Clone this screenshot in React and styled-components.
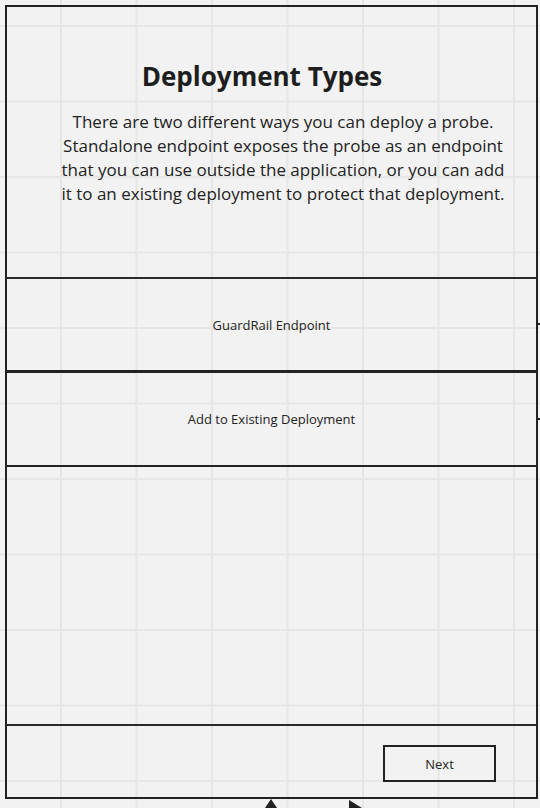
import React from "react";
import styled, { createGlobalStyle } from "styled-components";

const Global = createGlobalStyle`
  html, body {
    margin: 0;
    padding: 0;
    width: 540px;
    height: 808px;
    overflow: hidden;
  }
  body {
    background-color: #f2f2f2;
    background-image:
      linear-gradient(to right, #e6e6e6 2px, transparent 2px),
      linear-gradient(to bottom, #e6e6e6 2px, transparent 2px);
    background-size: 75.5px 75.5px;
    background-position: 60px 25px;
    font-family: "Open Sans", "Noto Sans", sans-serif;
    color: #222;
  }
`;

const Canvas = styled.div`
  position: relative;
  width: 540px;
  height: 808px;
  padding: 5px 2px 0 5px;
  box-sizing: border-box;
`;

const Frame = styled.div`
  width: 533px;
  height: 794px;
  box-sizing: border-box;
  border: 2px solid #222;
  display: flex;
  flex-direction: column;
`;

const Header = styled.section`
  height: 272px;
  box-sizing: border-box;
  border-bottom: 2px solid #2a2a2a;
  padding-top: 51px;
  display: flex;
  flex-direction: column;
  align-items: center;
`;

const Title = styled.h1`
  margin: 0 19px 0 0;
  font-size: 26px;
  font-weight: 700;
  color: #1e1e1e;
`;

const Lead = styled.p`
  margin: 16px 0 0 23px;
  width: 450px;
  font-size: 17px;
  line-height: 24px;
  text-align: center;
  color: #222;
`;

const Option = styled.div`
  height: ${(p) => p.$h}px;
  box-sizing: border-box;
  border-bottom: ${(p) => p.$b}px solid #222;
  display: flex;
  align-items: center;
  justify-content: center;
  font-size: 13px;
  color: #222;
`;

const Spacer = styled.div`
  flex: 1;
`;

const Footer = styled.footer`
  height: 73px;
  box-sizing: border-box;
  border-top: 2px solid #2a2a2a;
  display: flex;
  justify-content: flex-end;
  align-items: flex-start;
  padding: 19px 40px 0 0;
`;

const NextButton = styled.button`
  width: 113px;
  height: 37px;
  box-sizing: border-box;
  border: 2px solid #222;
  background: transparent;
  font-family: "Open Sans", "Noto Sans", sans-serif;
  font-size: 13px;
  color: #222;
  padding: 0;
`;

const Tick = styled.div`
  position: absolute;
  left: 538px;
  top: ${(p) => p.$y}px;
  width: 2px;
  height: 2px;
  background: #222;
`;

const Arrows = styled.svg`
  position: absolute;
  left: 0;
  top: 790px;
`;

export default function App() {
  return (
    <>
      <Global />
      <Canvas>
        <Frame>
          <Header>
            <Title>Deployment Types</Title>
            <Lead>
              There are two different ways you can deploy a probe. Standalone
              endpoint exposes the probe as an endpoint that you can use outside
              the application, or you can add it to an existing deployment to
              protect that deployment.
            </Lead>
          </Header>
          <Option $h={94} $b={3}>GuardRail Endpoint</Option>
          <Option $h={94} $b={2}>Add to Existing Deployment</Option>
          <Spacer />
          <Footer>
            <NextButton>Next</NextButton>
          </Footer>
        </Frame>
        <Tick $y={323} />
        <Tick $y={418} />
        <Arrows width="540" height="18" viewBox="0 790 540 18">
          <polygon points="271,799 265,808 277,808" fill="#222" />
          <polygon points="349,800 362,808 349,808" fill="#222" />
        </Arrows>
      </Canvas>
    </>
  );
}
